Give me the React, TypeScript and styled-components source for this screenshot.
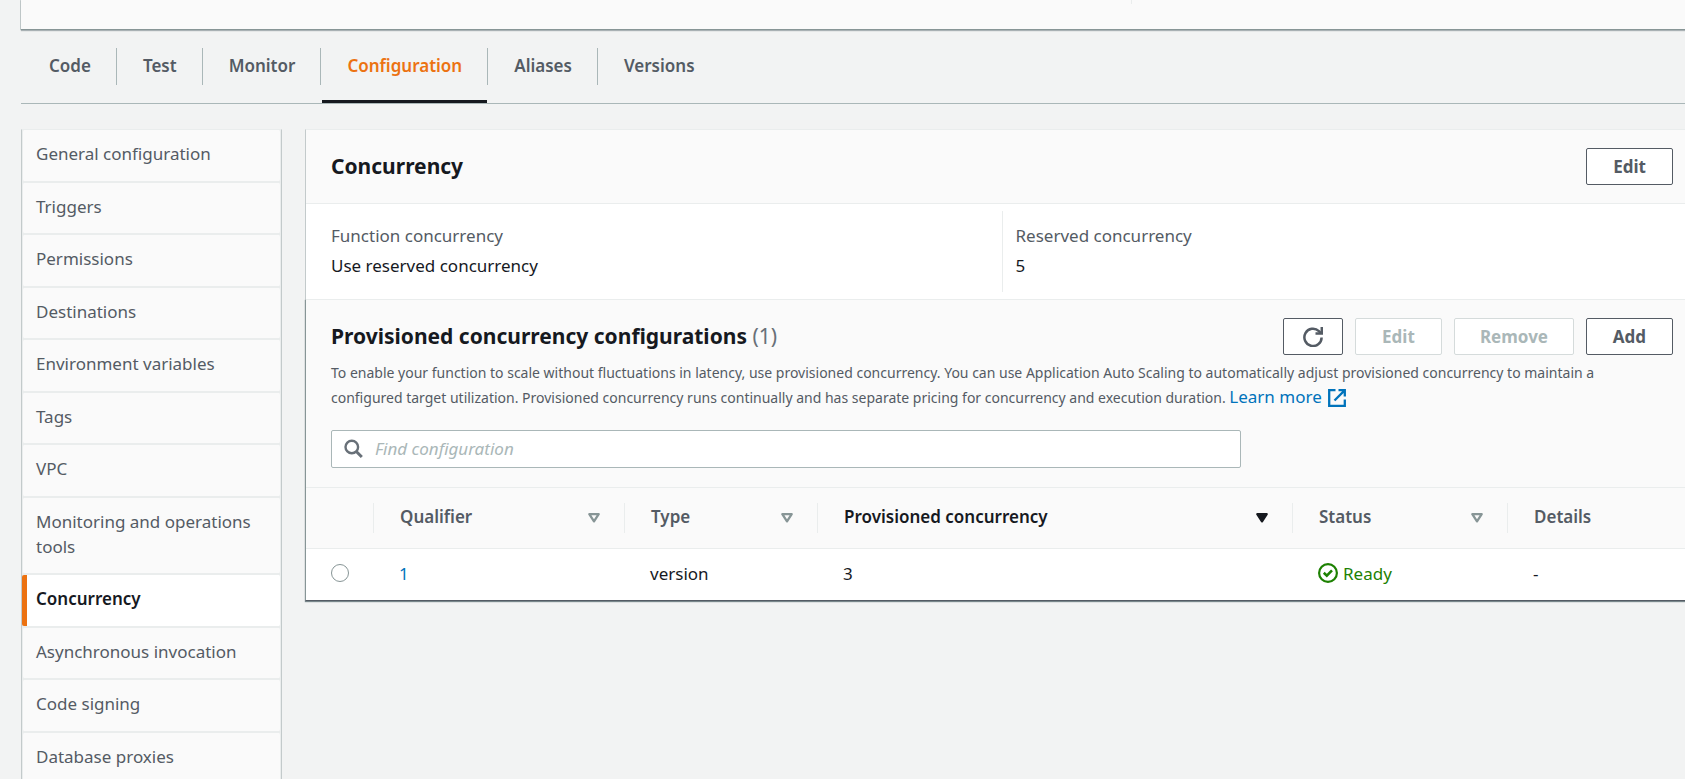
import React from "react";
import styled, { createGlobalStyle } from "styled-components";

const sans = `"Noto Sans", "Open Sans", sans-serif`;

const color = {
  page: "#f2f3f3",
  panel: "#fafafa",
  line: "#eaeded",
  edge: "#aab7b8",
  softEdge: "#c3cacb",
  ink: "#16191f",
  text: "#545b64",
  link: "#0073bb",
  orange: "#ec7211",
  green: "#1d8102",
};

const GlobalStyle = createGlobalStyle`
  *, *::before, *::after { box-sizing: border-box; }
  body {
    margin: 0;
    background: ${color.page};
    color: ${color.ink};
    font: 400 17px/25px ${sans};
    overflow: hidden;
  }
  button, input { font: inherit; }
  a { text-decoration: none; }
`;

const Page = styled.div`
  height: 100vh;
  overflow: hidden;
  padding-left: 21px;
`;

const OverviewPanel = styled.section`
  display: grid;
  grid-template-columns: 1111px 1fr;
  height: 30px;
  background: ${color.panel};
  border-bottom: 1px solid #879596;
  box-shadow: 0 1px 1px rgba(0, 28, 36, 0.3), -1px 0 0 #c9d0d1;
`;

const OverviewColumn = styled.div`
  height: 4px;
  border-right: 1px solid ${color.line};
`;

const Tabs = styled.nav`
  display: flex;
  height: 74px;
  padding-top: 18px;
  border-bottom: 1px solid ${color.edge};
`;

const Tab = styled.a<{ $active?: boolean }>`
  position: relative;
  height: 37px;
  padding: 0 25px 0 26px;
  line-height: 35px;
  font-weight: 600;
  color: ${(p) => (p.$active ? color.orange : color.text)};
  border-right: 1px solid ${color.edge};

  &:first-child { padding-left: 28px; }
  &:last-child { border-right: 0; }

  &::after {
    content: "";
    display: ${(p) => (p.$active ? "block" : "none")};
    position: absolute;
    left: 1px;
    right: 0;
    top: 52px;
    height: 3px;
    background: ${color.ink};
  }
`;

const Body = styled.div`
  display: flex;
  align-items: flex-start;
  gap: 23px;
  margin-right: -12px;
  padding-top: 25px;
`;

const SideNav = styled.nav`
  flex: none;
  width: 261px;
  background: ${color.line};
  border: 1px solid ${color.softEdge};
  border-width: 1px 1px 0;
  border-top-color: ${color.line};
`;

const SideLink = styled.a<{ $active?: boolean }>`
  display: block;
  margin-bottom: 2px;
  padding: 11px 14px 14px;
  border-left: ${(p) => (p.$active ? `5px solid ${color.orange}` : `1px solid ${color.line}`)};
  border-right: 1px solid ${color.line};
  padding-left: ${(p) => (p.$active ? 9 : 13)}px;
  border-radius: 2px;
  background: ${(p) => (p.$active ? "#fff" : color.panel)};
  color: ${(p) => (p.$active ? color.ink : color.text)};
  font-weight: ${(p) => (p.$active ? 600 : 400)};

  &:nth-child(odd) { padding-bottom: 15px; }
`;

const Card = styled.main`
  flex: 1;
  min-width: 0;
  background: #fff;
  border-left: 1px solid ${color.softEdge};
  border-top: 1px solid ${color.line};
`;

const CardHeader = styled.header`
  display: flex;
  align-items: center;
  justify-content: space-between;
  height: 74px;
  padding: 0 24px 0 25px;
  background: ${color.panel};
  border-bottom: 1px solid ${color.line};
`;

const Title = styled.h2`
  margin: 0;
  padding-bottom: 2px;
  font-size: 21px;
  line-height: 30px;
  font-weight: 700;
`;

const Count = styled.span`
  font-weight: 400;
  color: #687078;
`;

const Actions = styled.div`
  display: flex;
  gap: 12px;
`;

const Button = styled.button<{ $icon?: boolean }>`
  display: flex;
  align-items: center;
  justify-content: center;
  height: 37px;
  min-width: ${(p) => (p.$icon ? 60 : 87)}px;
  padding: 0 ${(p) => (p.$icon ? 19 : 25)}px;
  border: 1px solid ${color.text};
  border-radius: 2px;
  background: #fff;
  color: ${color.text};
  font-weight: 700;

  &:disabled {
    border-color: #d5dbdb;
    color: ${color.edge};
  }
`;

const Facts = styled.dl`
  display: grid;
  grid-template-columns: 1fr 1fr;
  margin: 0;
  padding: 7px 0;
`;

const Fact = styled.div`
  height: 81px;
  padding: 12px 13px 0;

  &:first-child { padding-left: 25px; }
  & + & { border-left: 1px solid ${color.line}; }
`;

const Label = styled.dt`
  color: ${color.text};
`;

const Value = styled.dd`
  margin: 5px 0 0;
`;

const Provisioned = styled.section`
  margin-left: -1px;
  background: ${color.panel};
  border-top: 1px solid ${color.line};
  border-left: 1px solid #879596;
  border-bottom: 1px solid ${color.text};
  box-shadow: 0 1px 1px rgba(0, 28, 36, 0.5);
`;

const ProvisionedTop = styled.div`
  padding: 18px 24px 19px 25px;
`;

const TitleRow = styled.div`
  display: flex;
  align-items: center;
  justify-content: space-between;
`;

const Description = styled.p`
  max-width: 1320px;
  margin: 5px 0 20px;
  font-size: 14px;
  color: ${color.text};
`;

const LearnMore = styled.a`
  font-size: 17px;
  line-height: 20px;
  color: ${color.link};
  white-space: nowrap;

  svg { margin-left: 6px; vertical-align: -4px; }
`;

const Search = styled.label`
  display: flex;
  align-items: center;
  gap: 11px;
  width: 910px;
  max-width: 100%;
  height: 38px;
  padding: 0 12px;
  border: 1px solid ${color.edge};
  border-radius: 2px;
  background: #fff;
`;

const SearchInput = styled.input`
  flex: 1;
  min-width: 0;
  padding: 0 0 2px;
  border: 0;
  outline: 0;
  background: transparent;
  color: ${color.ink};

  &::placeholder {
    color: ${color.edge};
    font-style: italic;
    opacity: 1;
  }
`;

const Table = styled.table`
  width: 100%;
  table-layout: fixed;
  border-collapse: collapse;
  border-top: 1px solid ${color.line};
`;

const HeadCell = styled.th<{ $width?: number; $sorted?: boolean }>`
  width: ${(p) => (p.$width ? `${p.$width}px` : "auto")};
  height: 61px;
  padding: 0;
  text-align: left;
  font-weight: 600;
  color: ${(p) => (p.$sorted ? color.ink : color.text)};
`;

const HeadInner = styled.div<{ $last?: boolean }>`
  display: flex;
  align-items: center;
  justify-content: space-between;
  height: 30px;
  padding: 0 24px 0 26px;
  line-height: 28px;
  border-right: ${(p) => (p.$last ? 0 : 1)}px solid ${color.line};
`;

const HeadLabel = styled.span`
  padding-bottom: 2px;
`;

const Row = styled.tr`
  background: #fff;
  border-top: 1px solid ${color.line};
`;

const Cell = styled.td`
  height: 51px;
  padding: 0 25px 2px;
`;

const SelectCell = styled(Cell)`
  line-height: 0;
`;

const Radio = styled.input`
  appearance: none;
  width: 18px;
  height: 18px;
  margin: 0;
  border: 1px solid #879596;
  border-radius: 50%;
  background: #fff;
`;

const CellLink = styled.a`
  color: ${color.link};
`;

const Status = styled.span`
  display: flex;
  align-items: center;
  gap: 5px;
  color: ${color.green};
`;

const SearchIcon = () => (
  <svg width="20" height="20" viewBox="0 0 20 20" fill="none" stroke="#687078" strokeWidth="2.4" aria-hidden="true">
    <circle cx="7.8" cy="8" r="6.3" />
    <path d="M12.3 12.5l5.5 5.5" strokeWidth="3" />
  </svg>
);

const RefreshIcon = () => (
  <svg width="20" height="20" viewBox="0 0 20 20" fill="none" stroke="currentColor" strokeWidth="2.5" aria-hidden="true">
    <path d="M18.6 10.4a8.6 8.6 0 1 1-2.7-6.3l2 2" />
    <path d="M18.8 0v6.4h-6.3" />
  </svg>
);

const ExternalIcon = () => (
  <svg width="18" height="18" viewBox="0 0 18 18" fill="none" stroke="currentColor" strokeWidth="2.3" aria-hidden="true">
    <path d="M7.5 1.2H1.2v15.6h15.6v-6.3" />
    <path d="M10.5 1.2h6.3v6.3M16.6 1.4L6.5 11.5" />
  </svg>
);

const SortIcon = ({ filled }: { filled?: boolean }) => (
  <svg width="12" height="10" viewBox="0 0 12 10" aria-hidden="true">
    <path
      d="M1.3 1.2h9.4L6 8.4z"
      fill={filled ? color.ink : "none"}
      stroke={filled ? color.ink : "#879596"}
      strokeWidth="2.3"
      strokeLinejoin="round"
    />
  </svg>
);

const ReadyIcon = () => (
  <svg width="20" height="20" viewBox="0 0 20 20" fill="none" stroke="currentColor" strokeWidth="2.2" aria-hidden="true">
    <circle cx="10" cy="10" r="8.9" />
    <path d="M5.8 9.8l3 2.8 5.2-5.2" strokeWidth="2.6" />
  </svg>
);

const tabs = ["Code", "Test", "Monitor", "Configuration", "Aliases", "Versions"];

const sections = [
  "General configuration",
  "Triggers",
  "Permissions",
  "Destinations",
  "Environment variables",
  "Tags",
  "VPC",
  "Monitoring and operations tools",
  "Concurrency",
  "Asynchronous invocation",
  "Code signing",
  "Database proxies",
];

const columns = [
  { name: "Qualifier", width: 251 },
  { name: "Type", width: 193 },
  { name: "Provisioned concurrency", sorted: true },
  { name: "Status", width: 215 },
];

export default function App() {
  return (
    <>
      <GlobalStyle />
      <Page>
        <OverviewPanel>
          <OverviewColumn />
        </OverviewPanel>
        <Tabs>
          {tabs.map((t) => (
            <Tab key={t} href="#" $active={t === "Configuration"}>
              {t}
            </Tab>
          ))}
        </Tabs>
        <Body>
          <SideNav>
            {sections.map((s) => (
              <SideLink key={s} href="#" $active={s === "Concurrency"}>
                {s}
              </SideLink>
            ))}
          </SideNav>
          <Card>
            <CardHeader>
              <Title>Concurrency</Title>
              <Button>Edit</Button>
            </CardHeader>
            <Facts>
              <Fact>
                <Label>Function concurrency</Label>
                <Value>Use reserved concurrency</Value>
              </Fact>
              <Fact>
                <Label>Reserved concurrency</Label>
                <Value>5</Value>
              </Fact>
            </Facts>
            <Provisioned>
              <ProvisionedTop>
                <TitleRow>
                  <Title>
                    Provisioned concurrency configurations <Count>(1)</Count>
                  </Title>
                  <Actions>
                    <Button $icon aria-label="Refresh">
                      <RefreshIcon />
                    </Button>
                    <Button disabled>Edit</Button>
                    <Button disabled>Remove</Button>
                    <Button>Add</Button>
                  </Actions>
                </TitleRow>
                <Description>
                  To enable your function to scale without fluctuations in latency, use provisioned concurrency. You can
                  use Application Auto Scaling to automatically adjust provisioned concurrency to maintain a configured
                  target utilization. Provisioned concurrency runs continually and has separate pricing for concurrency
                  and execution duration.{" "}
                  <LearnMore href="#">
                    Learn more
                    <ExternalIcon />
                  </LearnMore>
                </Description>
                <Search>
                  <SearchIcon />
                  <SearchInput type="text" placeholder="Find configuration" aria-label="Find configuration" />
                </Search>
              </ProvisionedTop>
              <Table>
                <thead>
                  <tr>
                    <HeadCell $width={68}>
                      <HeadInner />
                    </HeadCell>
                    {columns.map((c) => (
                      <HeadCell key={c.name} $width={c.width} $sorted={c.sorted}>
                        <HeadInner>
                          <HeadLabel>{c.name}</HeadLabel>
                          <SortIcon filled={c.sorted} />
                        </HeadInner>
                      </HeadCell>
                    ))}
                    <HeadCell $width={189}>
                      <HeadInner $last>
                        <HeadLabel>Details</HeadLabel>
                      </HeadInner>
                    </HeadCell>
                  </tr>
                </thead>
                <tbody>
                  <Row>
                    <SelectCell>
                      <Radio type="radio" name="configuration" aria-label="Select qualifier 1" />
                    </SelectCell>
                    <Cell>
                      <CellLink href="#">1</CellLink>
                    </Cell>
                    <Cell>version</Cell>
                    <Cell>3</Cell>
                    <Cell>
                      <Status>
                        <ReadyIcon />
                        Ready
                      </Status>
                    </Cell>
                    <Cell>-</Cell>
                  </Row>
                </tbody>
              </Table>
            </Provisioned>
          </Card>
        </Body>
      </Page>
    </>
  );
}
